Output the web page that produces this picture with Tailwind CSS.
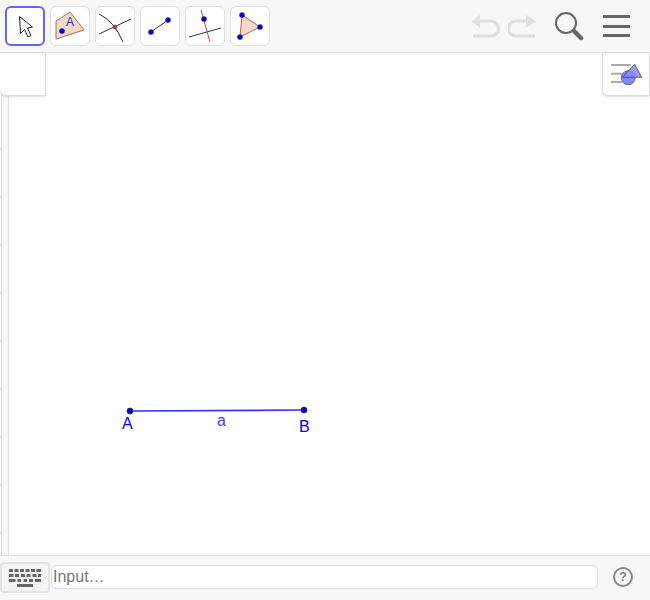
<!DOCTYPE html>
<html lang="en">
<head>
    <meta charset="UTF-8">
    <meta name="viewport" content="width=device-width, initial-scale=1.0">
    <title>GeoGebra</title>
    <script src="https://cdn.jsdelivr.net/npm/@tailwindcss/browser@4"></script>
</head>
<body class="bg-white h-screen overflow-hidden font-['Liberation_Sans',sans-serif]">
    <div class="flex flex-col h-[600px] w-[650px]">
        <!-- Toolbar -->
        <div class="h-[53px] shrink-0 bg-[#f7f7f7] border-b border-[#e0e0e0] flex items-start pt-[6px] pl-[5px] pr-[20px]">
            <div class="flex gap-[5px]">
                <!-- Move -->
                <button class="w-10 h-10 bg-white rounded-md border-2 border-[#6464ff] flex items-center justify-center">
                    <svg width="36" height="36" viewBox="0 0 36 36"><path d="M12.500 8.500 L13.500 25.500 L17.500 21.500 L21 29 L24 27.500 L20.500 20 L25.500 19 Z" fill="#fff" stroke="#222" stroke-width="1"/></svg>
                </button>
                <!-- Polygon -->
                <button class="w-10 h-10 bg-white rounded-md border border-[#e0e0e0] flex items-center justify-center">
                    <svg width="38" height="38" viewBox="0 0 38 38"><path d="M5 14 L19 5 L33 23 L5 32 Z" fill="#efd9cc" stroke="#b8694a" stroke-width="1"/><circle cx="11" cy="24" r="2.600" fill="#0000e0" stroke="#333" stroke-width=".4"/><text x="15" y="19" font-size="12" fill="#2a2ae0" font-family="Liberation Sans, sans-serif">A</text></svg>
                </button>
                <!-- Intersect -->
                <button class="w-10 h-10 bg-white rounded-md border border-[#e0e0e0] flex items-center justify-center">
                    <svg width="38" height="38" viewBox="0 0 38 38"><path d="M3 27 L35 12" stroke="#333" stroke-width="1" fill="none"/><path d="M3 7 Q18 14 27 35" stroke="#222" stroke-width="1" fill="none"/><circle cx="19" cy="20" r="2" fill="#e03030" stroke="#444" stroke-width=".6"/></svg>
                </button>
                <!-- Segment -->
                <button class="w-10 h-10 bg-white rounded-md border border-[#e0e0e0] flex items-center justify-center">
                    <svg width="38" height="38" viewBox="0 0 38 38"><path d="M10 25 L27 13" stroke="#333" stroke-width="1"/><circle cx="10" cy="25" r="2.600" fill="#0000e0" stroke="#333" stroke-width=".4"/><circle cx="27" cy="13" r="2.600" fill="#0000e0" stroke="#333" stroke-width=".4"/></svg>
                </button>
                <!-- Perpendicular -->
                <button class="w-10 h-10 bg-white rounded-md border border-[#e0e0e0] flex items-center justify-center">
                    <svg width="38" height="38" viewBox="0 0 38 38"><path d="M3 30 L35 21" stroke="#333" stroke-width="1"/><path d="M15 3 L24 35" stroke="#ee3344" stroke-width="1"/><circle cx="18" cy="12" r="2.600" fill="#0000e0" stroke="#333" stroke-width=".4"/></svg>
                </button>
                <!-- Triangle -->
                <button class="w-10 h-10 bg-white rounded-md border border-[#e0e0e0] flex items-center justify-center">
                    <svg width="38" height="38" viewBox="0 0 38 38"><path d="M11 8 L29 20 L9 30 Z" fill="#efd9cc" stroke="#b8694a" stroke-width="1"/><circle cx="11" cy="8" r="2.600" fill="#0000e0" stroke="#333" stroke-width=".4"/><circle cx="29" cy="20" r="2.600" fill="#0000e0" stroke="#333" stroke-width=".4"/><circle cx="9" cy="30" r="2.600" fill="#0000e0" stroke="#333" stroke-width=".4"/></svg>
                </button>
            </div>
            <div class="ml-auto flex items-center h-10">
                <!-- Undo / redo -->
                <svg width="30" height="26" viewBox="0 0 30 26" fill="none" stroke="#e0e0e0" stroke-width="3.200"><path d="M8 8 H21 A7 7 0 0 1 21 23 H3"/><path d="M1.500 8.500 L10 2 V15 Z" fill="#e0e0e0" stroke="none"/></svg>
                <svg class="ml-[8px]" width="30" height="26" viewBox="0 0 30 26" fill="none" stroke="#e0e0e0" stroke-width="3.200"><path d="M21 8 H8 A7 7 0 0 0 8 23 H27"/><path d="M28.500 8.500 L18 2 V15 Z" fill="#e0e0e0" stroke="none"/></svg>
                <!-- Search -->
                <svg class="ml-[16px]" width="30" height="32" viewBox="0 0 30 32" fill="none"><circle cx="12" cy="13" r="10" stroke="#666" stroke-width="2"/><path d="M20.500 21.500 L27 28" stroke="#666" stroke-width="4.500" stroke-linecap="round"/></svg>
                <!-- Menu -->
                <div class="ml-[19px] w-[27px] flex flex-col gap-[6.5px]">
                    <div class="h-[3px] bg-[#666]"></div>
                    <div class="h-[3px] bg-[#666]"></div>
                    <div class="h-[3px] bg-[#666]"></div>
                </div>
            </div>
        </div>

        <!-- Graphics view -->
        <div class="relative flex-1 bg-white">
            <!-- Axis strip -->
            <div class="absolute left-[1px] top-0 bottom-0 w-[8px] bg-[#f7f7f7] border-x border-[#dedede]"></div>
            <!-- Construction, with the axis ticks -->
            <svg class="absolute inset-0" width="650" height="502" viewBox="0 53 650 502">
                <path d="M0 148.500h2M0 196.500h2M0 244.500h2M0 292.500h2M0 340.500h2M0 388.500h2M0 436.500h2M0 484.500h2M0 532.500h2" stroke="#cfcfcf" stroke-width="1"/>
                <path d="M130 411 L304 410" stroke="#3333ff" stroke-width="1.700"/>
                <circle cx="130" cy="411" r="3" fill="#0000d8" stroke="#333" stroke-width=".8"/>
                <circle cx="304" cy="410" r="3" fill="#0000d8" stroke="#333" stroke-width=".8"/>
            </svg>
            <!-- Collapsed panel top left -->
            <div class="absolute left-0 top-0 w-[46px] h-[43px] bg-white border-r border-b border-[#dcdcdc] rounded-bl-md shadow-sm"></div>
            <!-- Style bar toggle -->
            <div class="absolute right-0 top-0 w-[48px] h-[43px] bg-white border-l border-b border-r border-[#dcdcdc] rounded-bl-md shadow-sm flex items-center justify-center">
                <svg width="34" height="28" viewBox="0 0 34 28"><path d="M2 5 H22 M2 13.700 H13 M2 22 H13" stroke="#aaa" stroke-width="2"/><circle cx="19.300" cy="17.700" r="7" fill="#8888ff" stroke="#555" stroke-width=".8"/><path d="M25.700 4.300 L32.700 17.300 H13.300 Z" fill="#8888ff" fill-opacity=".85" stroke="#444" stroke-width=".8"/></svg>
            </div>
            <span class="absolute left-[122px] top-[363px] text-base leading-none text-[#0000ff]">A</span>
            <span class="absolute left-[299px] top-[366px] text-base leading-none text-[#0000ff]">B</span>
            <span class="absolute left-[217px] top-[360px] text-base leading-none text-[#4040ff]">a</span>
        </div>

        <!-- Input bar -->
        <div class="h-[45px] shrink-0 bg-[#f7f7f7] border-t border-[#e0e0e0] flex items-start">
            <button class="w-[50px] h-[31px] mt-[6px] bg-[#f5f5f5] border-2 border-[#e4e4e4] rounded-sm flex items-center justify-center">
                <svg width="32" height="18" viewBox="0 0 32 18" fill="#666"><path d="M0 0h4v3H0zM5.500 0h4v3h-4zM11 0h4v3h-4zM16.500 0h4v3h-4zM22 0h4v3h-4zM27.500 0h4.500v3h-4.500zM0 5h4.500v3H0zM6 5h4v3H6zM12 5h4v3h-4zM17.500 5h4v3h-4zM23.500 5h4v3h-4zM29 5h3v3h-3zM0 10h6.500v3H0zM8.500 10h3.500v3H8.500zM14.500 10h3.500v3h-3.500zM20 10h4v3h-4zM26 10h6v3h-6zM8 15h16v3H8z"/></svg>
            </button>
            <div class="ml-[1px] mt-[9px] w-[547px] h-[24px] bg-white border border-[#dcdcdc] rounded-md flex items-center pl-[1px] text-base text-[#777]">Input…</div>
            <div class="ml-[15px] mt-[11px] w-[20px] h-[20px] rounded-full border-2 border-[#888] flex items-center justify-center text-[13px] font-bold text-[#888]">?</div>
        </div>
    </div>
</body>
</html>
